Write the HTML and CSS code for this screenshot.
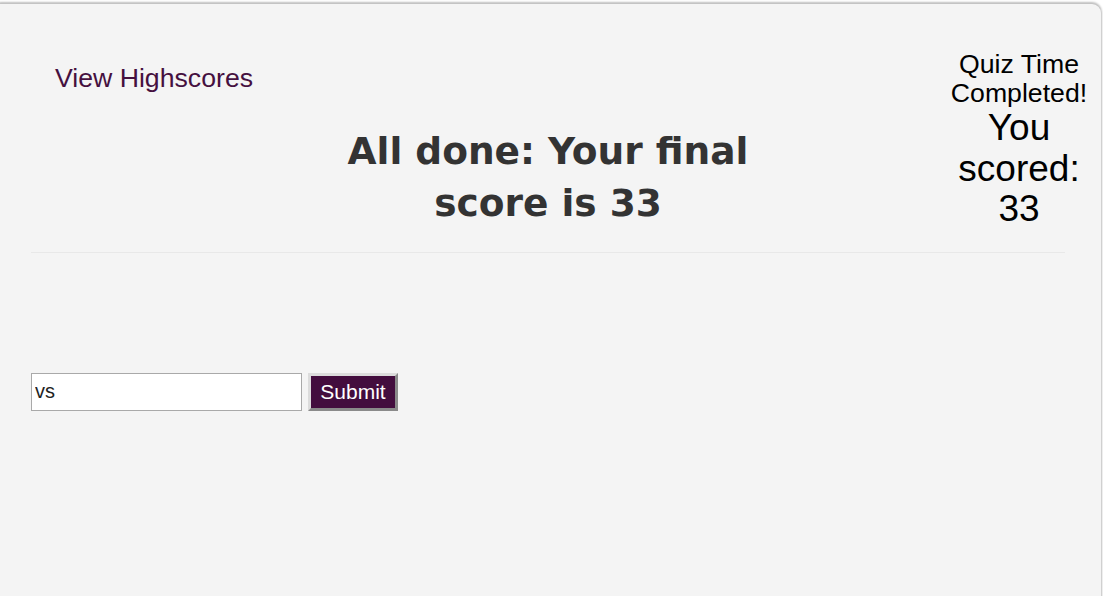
FILE: index.html
```html
<!DOCTYPE html>
<html lang="en">
<head>
<meta charset="utf-8">
<title>Quiz</title>
<link rel="stylesheet" href="styles.css">
</head>
<body>
<div class="card">
  <header class="top">
    <a class="scores" href="#">View Highscores</a>
    <h1 class="result">All done: Your final score is 33</h1>
    <div class="timer">
      <div class="timer-label">Quiz Time Completed!</div>
      <div class="timer-score">You scored: 33</div>
    </div>
  </header>
  <hr class="rule">
  <form class="entry">
    <input class="initials" type="text" value="vs">
    <button class="submit" type="button">Submit</button>
  </form>
</div>
</body>
</html>
```
FILE: styles.css
```css
html, body {
  margin: 0;
  padding: 0;
  background: #ffffff;
  overflow: hidden;
}
body {
  font-family: "Liberation Sans", Arial, sans-serif;
  height: 596px;
}
.card {
  margin: 4px 2px 0 -8px;
  padding: 0 36px 0 39px;
  background: #f4f4f4;
  border-radius: 9px;
  box-shadow: 0 -1px 2px 1px rgba(0, 0, 0, 0.25);
  min-height: 700px;
}
.top {
  display: grid;
  grid-template-columns: 1fr auto 1fr;
  align-items: start;
}
.scores {
  justify-self: start;
  margin: 59px 0 0 24px;
  font-size: 26.67px;
  line-height: 30px;
  color: #45103f;
  text-decoration: none;
}
.result {
  width: 440px;
  margin: 121px 0 0;
  font-family: "DejaVu Sans", Verdana, sans-serif;
  font-weight: bold;
  font-size: 37.5px;
  line-height: 52px;
  color: #333333;
  text-align: center;
}
.timer {
  justify-self: end;
  width: 140px;
  margin: 46px -24px 0 0;
  text-align: center;
  color: #000000;
}
.timer-label {
  font-size: 26.67px;
  line-height: 29px;
}
.timer-score {
  font-size: 37px;
  line-height: 40.5px;
}
.rule {
  margin: 22px 0 0;
  border: 0;
  border-top: 1px solid #e8e8e8;
  height: 0;
}
.entry {
  display: flex;
  align-items: center;
  gap: 6px;
  margin-top: 120px;
}
.initials {
  box-sizing: border-box;
  width: 271px;
  height: 38px;
  margin: 0;
  padding: 0 3px;
  border: 1px solid #a9a9a9;
  background: #ffffff;
  font-family: "Liberation Sans", Arial, sans-serif;
  font-size: 20px;
  color: #222222;
}
.submit {
  box-sizing: border-box;
  width: 90px;
  height: 38px;
  margin: 0;
  padding: 0;
  border: 3px solid;
  border-color: #dcdcdc #8a8a8a #8a8a8a #dcdcdc;
  background: #430d3e;
  color: #ffffff;
  font-family: "Liberation Sans", Arial, sans-serif;
  font-size: 21px;
}
```
